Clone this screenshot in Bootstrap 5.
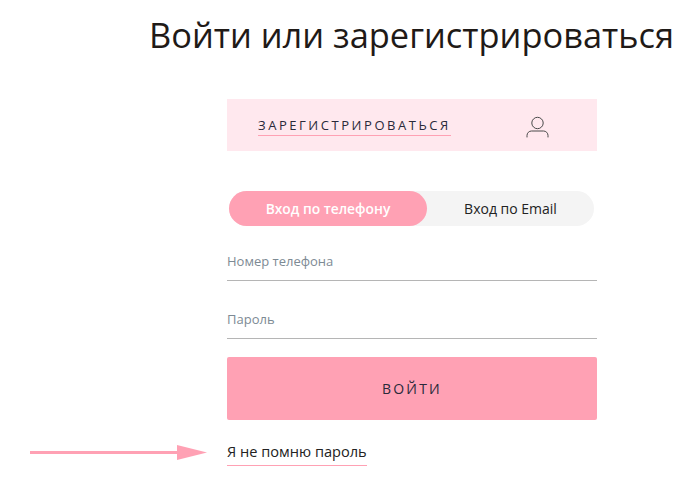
<!DOCTYPE html>
<html lang="ru">
<head>
<meta charset="utf-8">
<title>Войти</title>
<link rel="stylesheet" href="https://cdn.jsdelivr.net/npm/bootstrap@5.3.0/dist/css/bootstrap.min.css">
<style>
html,body{height:500px;overflow:hidden}
body{font-family:"Open Sans","Noto Sans",sans-serif;color:#222;background:#fff}
.page-title{font-family:"Open Sans",sans-serif;font-size:34.4px;font-weight:400;line-height:40px;color:#1f1a17;margin:15px 0 44px 149px;white-space:nowrap}
.form-col{width:370px;margin-left:227px}
.reg-box{height:52px;background:#ffe8ee;padding:0 47px 0 31px}
.reg-link{font-size:13px;letter-spacing:2.55px;line-height:18px;color:#2a2a3a;text-decoration:none;border-bottom:1px solid #ffa1b4;padding-bottom:1px;white-space:nowrap;margin-top:1px}
.user-ico{margin-top:4px}
.tabs-wrap{width:365px;height:35px;margin:40px 0 0 2px;background:#f4f4f4;border-radius:18px}
.tab-item{font-size:14px;font-weight:500;line-height:35px;text-align:center;color:#222;text-decoration:none;border-radius:18px}
.tab-item.tab-on{flex:0 0 198px;background:#ffa1b4;color:#fff;font-weight:600;font-size:13.8px}
.tab-item.tab-off{flex:0 0 167px}
.field-line{height:39px;border-bottom:1px solid #b5b5b5;font-size:13px;line-height:18px;color:#7d8a94;padding-top:10px}
.field-first{margin-top:16px}
.field-next{margin-top:19px;height:39px}
.enter-btn{display:block;width:100%;height:63px;margin-top:18px;background:#ffa1b4;border:0;border-radius:2px;font-size:14px;letter-spacing:2.2px;color:#2a2a3a}
.forgot-row{margin-top:19px;height:26px}
.forgot-link{font-size:14.6px;line-height:20px;color:#222;text-decoration:none;border-bottom:1px solid #ffa1b4;padding-bottom:4px;display:inline-block;white-space:nowrap}
.arrow-svg{position:absolute;left:30px;top:445px}
</style>
</head>
<body>
<h1 class="page-title">Войти или зарегистрироваться</h1>
<div class="form-col">
  <div class="reg-box d-flex align-items-center justify-content-between">
    <a class="reg-link" href="#">ЗАРЕГИСТРИРОВАТЬСЯ</a>
    <svg class="user-ico" width="24" height="22" viewBox="0 0 24 22" fill="none" stroke="#4a4a4a" stroke-width="1"><circle cx="11.500" cy="7" r="5.700"/><path d="M1 21v-1.500a4.500 4.500 0 0 1 4.500-4.500h12a4.500 4.500 0 0 1 4.500 4.500v1.500" stroke-linecap="round"/></svg>
  </div>
  <div class="tabs-wrap d-flex">
    <a class="tab-item tab-on" href="#">Вход по телефону</a>
    <a class="tab-item tab-off" href="#">Вход по Email</a>
  </div>
  <div class="field-line field-first">Номер телефона</div>
  <div class="field-line field-next">Пароль</div>
  <button class="enter-btn" type="button">ВОЙТИ</button>
  <div class="forgot-row"><a class="forgot-link" href="#">Я не помню пароль</a></div>
</div>
<svg class="arrow-svg" width="178" height="15" viewBox="0 0 178 15"><rect x="0" y="6" width="150" height="3" fill="#ffa1b4"/><polygon points="147,0 177,7.500 147,15" fill="#ffa1b4"/></svg>
<script src="https://cdn.jsdelivr.net/npm/bootstrap@5.3.0/dist/js/bootstrap.bundle.min.js"></script>
</body>
</html>
